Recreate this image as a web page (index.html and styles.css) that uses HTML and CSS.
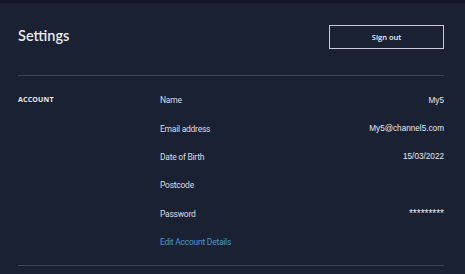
FILE: index.html
```html
<!DOCTYPE html>
<html lang="en">
<head>
<meta charset="UTF-8">
<meta name="viewport" content="width=device-width, initial-scale=1.0">
<title>Settings</title>
<link rel="stylesheet" href="styles.css">
</head>
<body>
<div class="settings">
  <div class="settings-header">
    <h1 class="settings-title">Settings</h1>
    <button class="signout-btn">Sign out</button>
  </div>
  <div class="settings-section">
    <div class="section-name">ACCOUNT</div>
    <div class="section-rows">
      <div class="row"><span class="row-label">Name</span><span class="row-value">My5</span></div>
      <div class="row"><span class="row-label">Email address</span><span class="row-value">My5@channel5.com</span></div>
      <div class="row"><span class="row-label">Date of Birth</span><span class="row-value">15/03/2022</span></div>
      <div class="row"><span class="row-label">Postcode</span><span class="row-value"></span></div>
      <div class="row"><span class="row-label">Password</span><span class="row-value stars">*********</span></div>
      <div class="row"><a class="row-link" href="#">Edit Account Details</a></div>
    </div>
  </div>
</div>
</body>
</html>
```

FILE: styles.css
```css
/* Settings page */
body {
  margin: 0;
  background: #1a2133;
  font-family: Roboto, sans-serif;
  color: #e8eaee;
}
.settings {
  border-top: 3px solid #121725;
  padding: 0 21px 0 18px;
  height: 271px;
}
.settings-header {
  display: flex;
  justify-content: space-between;
  align-items: flex-start;
  padding: 22px 0 26px;
  border-bottom: 1px solid #3d4453;
}
.settings-title {
  margin: 2px 0 0;
  font-family: Lato, sans-serif;
  font-size: 14.5px;
  line-height: 18px;
  font-weight: 600;
}
.signout-btn {
  width: 115px;
  height: 24px;
  background: transparent;
  border: 1px solid #c9cdd3;
  color: #eef0f3;
  font-family: "Open Sans", sans-serif;
  font-size: 7.5px;
  font-weight: 600;
  cursor: pointer;
}
.settings-section {
  display: grid;
  grid-template-columns: 142px 1fr;
  padding: 10px 0 9px;
  border-bottom: 1px solid #3d4453;
}
.section-name {
  font-family: "Open Sans", sans-serif;
  font-size: 7px;
  font-weight: 700;
  line-height: 27px;
  letter-spacing: 0.2px;
}
.row {
  display: flex;
  justify-content: space-between;
  align-items: center;
  height: 28.4px;
  font-size: 8.5px;
}
.row-label,
.row-link {
  letter-spacing: -0.25px;
}
.row-label {
  color: #d9dce1;
}
.row-value {
  font-family: "Liberation Sans", Arial, sans-serif;
  font-size: 8.2px;
}
.stars {
  font-size: 10px;
}
.row-link {
  color: #3b9bd8;
  text-decoration: none;
}
```
